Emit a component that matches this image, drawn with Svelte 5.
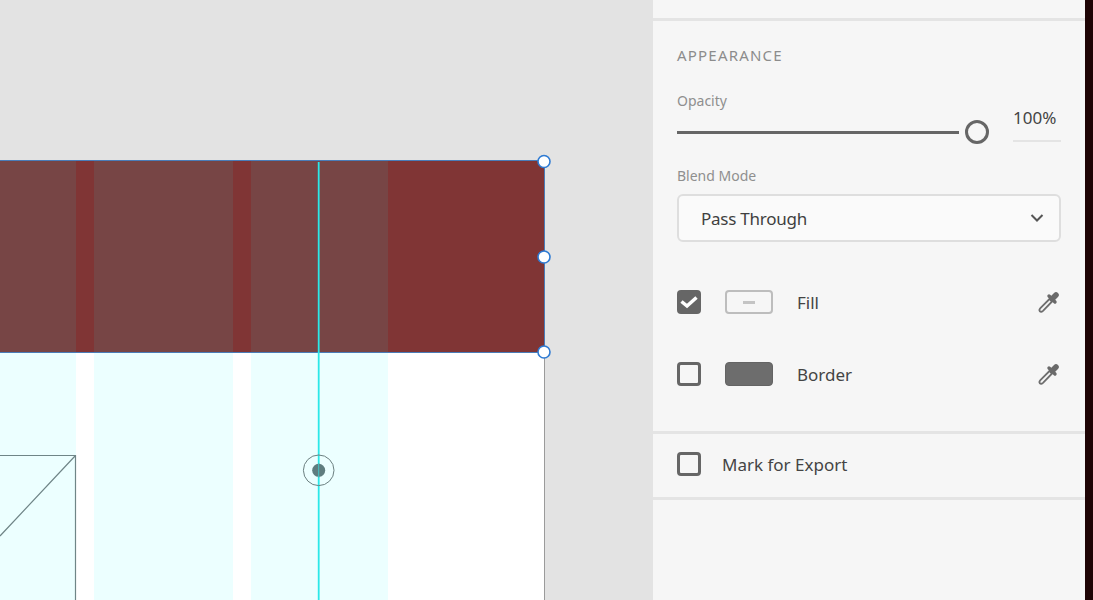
<script lang="ts">
	let opacity = $state(100);
	let blendMode = $state('Pass Through');
	let fillOn = $state(true);
	let borderOn = $state(false);
	let exportOn = $state(false);

	// artboard columns, as x and width on the canvas
	const columns = [
		{ x: 0, w: 76 },
		{ x: 94, w: 139 },
		{ x: 251, w: 137 }
	];
	const handles = [161.5, 257, 352];
</script>

{#snippet dropper()}
	<svg class="dropper" width="24" height="24" viewBox="0 0 24 24" aria-hidden="true">
		<path d="M13.5 8 L3.4 18.2 Q1.8 20 2.8 21.2 Q4.2 22.4 6 20.8 L16 10.5" fill="none" stroke="#6e6e6e" stroke-width="1.8" stroke-linejoin="round" />
		<line x1="12" y1="6" x2="18" y2="12" stroke="#6a6a6a" stroke-width="3.4" stroke-linecap="round" />
		<line x1="15" y1="9" x2="19" y2="5" stroke="#6a6a6a" stroke-width="5.6" stroke-linecap="round" />
	</svg>
{/snippet}

{#snippet checkbox(on: boolean)}
	<span class="check" class:on>
		{#if on}
			<svg width="24" height="24" viewBox="0 0 24 24" aria-hidden="true">
				<path d="M4.5 11.5 L10 16 L19.5 7.5" fill="none" stroke="#fff" stroke-width="3.5" />
			</svg>
		{/if}
	</span>
{/snippet}

<div class="app">
	<div class="canvas">
		<div class="artboard"></div>
		{#each columns as col}
			<div class="column" style="left: {col.x}px; width: {col.w}px"></div>
		{/each}
		<div class="selection">
			{#each columns as col}
				<div class="tint" style="left: {col.x}px; width: {col.w}px"></div>
			{/each}
		</div>
		<svg class="overlay" width="653" height="600" viewBox="0 0 653 600" aria-hidden="true">
			<path d="M0 455.5 H75.5 V600 M75.5 455.5 L0 536" fill="none" stroke="#6f8587" stroke-width="1.2" />
			<line x1="318.7" y1="162" x2="318.7" y2="600" stroke="#2be8e8" stroke-width="1.8" />
			<circle cx="318.7" cy="470.3" r="15.3" fill="none" stroke="#6b7f80" stroke-width="1" />
			<circle cx="318.7" cy="470.3" r="6.5" fill="#5f7d7f" />
			<line x1="318.7" y1="463" x2="318.7" y2="478" stroke="#45c4c6" stroke-width="1" />
			{#each handles as y}
				<circle cx="544" cy={y} r="6" fill="#fff" stroke="#2f7bd3" stroke-width="1.6" />
			{/each}
		</svg>
	</div>

	<aside class="panel">
		<div class="top"></div>

		<section class="appearance">
			<h2>Appearance</h2>

			<div class="field-label opacity-label">Opacity</div>
			<div class="slider-row">
				<div class="track"></div>
				<div class="thumb"></div>
				<div class="value">{opacity}%</div>
			</div>

			<div class="field-label blend-label">Blend Mode</div>
			<div class="select">
				<span>{blendMode}</span>
				<svg width="14" height="10" viewBox="0 0 14 10" aria-hidden="true">
					<path d="M1.5 2 L7 7.5 L12.5 2" fill="none" stroke="#555" stroke-width="2" />
				</svg>
			</div>

			<div class="style-row fill-row">
				{@render checkbox(fillOn)}
				<span class="swatch empty"><i></i></span>
				<span class="style-name">Fill</span>
				{@render dropper()}
			</div>
			<div class="style-row border-row">
				{@render checkbox(borderOn)}
				<span class="swatch solid"></span>
				<span class="style-name">Border</span>
				{@render dropper()}
			</div>
		</section>

		<section class="export">
			{@render checkbox(exportOn)}
			<span class="export-name">Mark for Export</span>
		</section>
	</aside>

	<div class="edge"></div>
</div>

<style>
	:global(body) {
		margin: 0;
		overflow: hidden;
	}

	.app {
		display: flex;
		width: 1093px;
		height: 600px;
		overflow: hidden;
		font-family: 'Noto Sans', sans-serif;
		background: #e3e3e3;
	}

	/* Canvas */
	.canvas {
		position: relative;
		width: 653px;
		flex: none;
		overflow: hidden;
	}

	.artboard {
		position: absolute;
		left: 0;
		top: 161px;
		width: 544px;
		height: 439px;
		background: #fff;
		border-right: 1.5px solid #9b9b9b;
	}

	.column {
		position: absolute;
		top: 161px;
		height: 439px;
		background: #ecffff;
	}

	.selection {
		position: absolute;
		left: 0;
		top: 161px;
		width: 544px;
		height: 191px;
		background: #803535;
		box-shadow: 0 -1px 0 #4a7cb8, 1px 0 0 #4a7cb8, 0 1px 0 #4a7cb8;
	}

	.tint {
		position: absolute;
		top: 0;
		height: 191px;
		background: #774545;
	}

	.overlay {
		position: absolute;
		left: 0;
		top: 0;
	}

	/* Panel */
	.panel {
		width: 432px;
		flex: none;
		background: #f6f6f6;
		color: #444;
	}

	.edge {
		flex: 1;
		background: #1e0405;
	}

	.top {
		height: 18px;
		border-bottom: 3px solid #e4e4e4;
	}

	.appearance {
		height: 385px;
		padding: 25px 24px 0;
		border-bottom: 3px solid #e4e4e4;
	}

	h2 {
		margin: 0;
		font-size: 15px;
		line-height: 18px;
		font-weight: 400;
		letter-spacing: 1.2px;
		text-transform: uppercase;
		color: #8c8c8c;
	}

	.field-label {
		font-size: 14px;
		line-height: 18px;
		color: #8f8f8f;
	}

	.opacity-label {
		margin-top: 28px;
	}

	.slider-row {
		display: flex;
		align-items: center;
		height: 40px;
		margin-top: 2px;
	}

	.track {
		width: 282px;
		height: 3px;
		background: #666;
	}

	.thumb {
		box-sizing: border-box;
		width: 24px;
		height: 24px;
		margin-left: 6px;
		border: 3px solid #666;
		border-radius: 50%;
	}

	.value {
		box-sizing: border-box;
		align-self: flex-start;
		width: 48px;
		height: 30px;
		margin-left: 24px;
		font-size: 17px;
		line-height: 12px;
		border-bottom: 2px solid #e4e4e4;
		color: #444;
	}

	.blend-label {
		margin-top: 15px;
	}

	.select {
		box-sizing: border-box;
		display: flex;
		align-items: center;
		justify-content: space-between;
		height: 48px;
		margin-top: 9px;
		padding: 0 15px 0 22px;
		background: #fafafa;
		border: 2px solid #dedede;
		border-radius: 6px;
		font-size: 17px;
		letter-spacing: -0.25px;
		color: #3f3f3f;
	}

	.style-row {
		display: flex;
		align-items: center;
		height: 24px;
	}

	.fill-row {
		margin-top: 48px;
	}

	.border-row {
		margin-top: 48px;
	}

	.check {
		box-sizing: border-box;
		display: block;
		flex: none;
		width: 24px;
		height: 24px;
		border: 3px solid #666;
		border-radius: 4px;
	}

	.check.on {
		border: none;
		background: #666;
	}

	.check svg {
		display: block;
	}

	.swatch {
		box-sizing: border-box;
		display: flex;
		align-items: center;
		justify-content: center;
		flex: none;
		width: 48px;
		height: 24px;
		margin-left: 24px;
		border-radius: 4px;
	}

	.swatch.empty {
		background: #f6f6f6;
		border: 2px solid #bdbdbd;
	}

	.swatch.empty i {
		display: block;
		width: 12px;
		height: 3px;
		background: #c4c4c4;
	}

	.swatch.solid {
		background: #6d6d6d;
		border: 1px solid #646464;
	}

	.style-name {
		flex: 1;
		margin-left: 24px;
		font-size: 17px;
		color: #444;
	}

	.dropper {
		flex: none;
	}

	.export {
		box-sizing: border-box;
		display: flex;
		align-items: center;
		height: 66px;
		padding: 0 24px 3px;
		border-bottom: 3px solid #e4e4e4;
	}

	.export-name {
		margin-left: 21px;
		font-size: 17px;
		color: #444;
	}
</style>
